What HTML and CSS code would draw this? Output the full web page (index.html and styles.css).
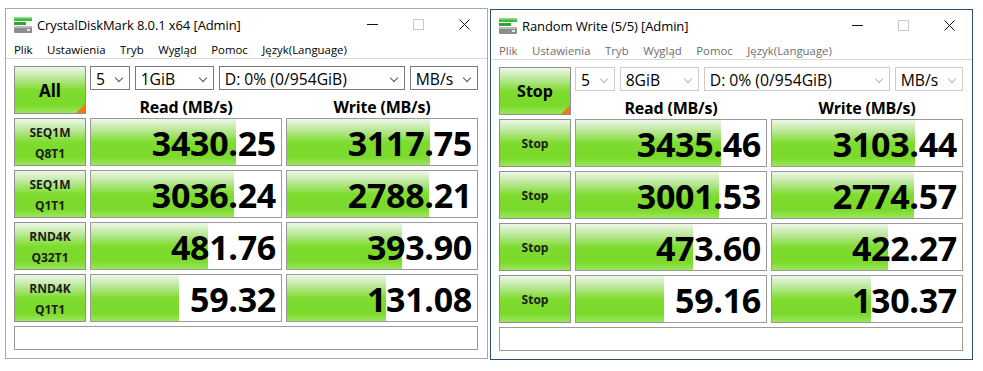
FILE: index.html
```html
<!DOCTYPE html>
<html>
<head>
    <title>CrystalDiskMark</title>
    <link rel="stylesheet" href="styles.css">
</head>
<body>
    <div class="desktop">
        <!-- finished run -->
        <div class="window">
            <div class="titlebar">
                <svg class="app-icon" width="18" height="16" viewBox="0 0 18 16">
                    <rect x="0" y="0" width="18" height="4" fill="#3dbb3d"/>
                    <rect x="0" y="0" width="18" height="1.5" fill="#8be38b"/>
                    <rect x="0" y="5" width="12" height="3" fill="#2fa52f"/>
                    <rect x="0" y="9" width="18" height="7" rx="1" fill="#8d8d8d"/>
                    <rect x="0" y="9" width="18" height="2" fill="#b9b9b9"/>
                    <rect x="13" y="12" width="3" height="2" fill="#e6e6e6"/>
                </svg>
                <span class="title">CrystalDiskMark 8.0.1 x64 [Admin]</span>
                <div class="caption-buttons">
                    <span class="cap cap-min"></span>
                    <span class="cap cap-max"></span>
                    <span class="cap cap-close">
                        <svg width="11" height="11" viewBox="0 0 11 11"><path d="M0.5 0.5 L10.5 10.5 M10.5 0.5 L0.5 10.5" stroke="#111" stroke-width="1"/></svg>
                    </span>
                </div>
            </div>
            <div class="menubar">
                <span>Plik</span><span>Ustawienia</span><span>Tryb</span><span>Wygląd</span><span>Pomoc</span><span>Język(Language)</span>
            </div>
            <div class="content">
                <div class="grid">
                    <div class="run-btn">All</div>
                    <div class="top-area">
                        <div class="selects">
                            <div class="select s-count">5<i class="arrow"></i></div>
                            <div class="select s-size">1GiB<i class="arrow"></i></div>
                            <div class="select s-drive">D: 0% (0/954GiB)<i class="arrow"></i></div>
                            <div class="select s-unit">MB/s<i class="arrow"></i></div>
                        </div>
                        <div class="headers">
                            <div>Read (MB/s)</div>
                            <div>Write (MB/s)</div>
                        </div>
                    </div>

                    <div class="label">SEQ1M<br>Q8T1</div>
                    <div class="meter"><div class="fill" style="width:145px"></div><span>3430.25</span></div>
                    <div class="meter"><div class="fill" style="width:143px"></div><span>3117.75</span></div>

                    <div class="label">SEQ1M<br>Q1T1</div>
                    <div class="meter"><div class="fill" style="width:143px"></div><span>3036.24</span></div>
                    <div class="meter"><div class="fill" style="width:142px"></div><span>2788.21</span></div>

                    <div class="label">RND4K<br>Q32T1</div>
                    <div class="meter"><div class="fill" style="width:117px"></div><span>481.76</span></div>
                    <div class="meter"><div class="fill" style="width:115px"></div><span>393.90</span></div>

                    <div class="label">RND4K<br>Q1T1</div>
                    <div class="meter"><div class="fill" style="width:88px"></div><span>59.32</span></div>
                    <div class="meter"><div class="fill" style="width:99px"></div><span>131.08</span></div>

                    <div class="status"></div>
                </div>
            </div>
        </div>

        <!-- running -->
        <div class="window window-active">
            <div class="titlebar">
                <svg class="app-icon" width="18" height="16" viewBox="0 0 18 16">
                    <rect x="0" y="0" width="18" height="4" fill="#3dbb3d"/>
                    <rect x="0" y="0" width="18" height="1.5" fill="#8be38b"/>
                    <rect x="0" y="5" width="12" height="3" fill="#2fa52f"/>
                    <rect x="0" y="9" width="18" height="7" rx="1" fill="#8d8d8d"/>
                    <rect x="0" y="9" width="18" height="2" fill="#b9b9b9"/>
                    <rect x="13" y="12" width="3" height="2" fill="#e6e6e6"/>
                </svg>
                <span class="title">Random Write (5/5) [Admin]</span>
                <div class="caption-buttons">
                    <span class="cap cap-min"></span>
                    <span class="cap cap-max"></span>
                    <span class="cap cap-close">
                        <svg width="11" height="11" viewBox="0 0 11 11"><path d="M0.5 0.5 L10.5 10.5 M10.5 0.5 L0.5 10.5" stroke="#111" stroke-width="1"/></svg>
                    </span>
                </div>
            </div>
            <div class="menubar disabled">
                <span>Plik</span><span>Ustawienia</span><span>Tryb</span><span>Wygląd</span><span>Pomoc</span><span>Język(Language)</span>
            </div>
            <div class="content">
                <div class="grid">
                    <div class="run-btn run-stop">Stop</div>
                    <div class="top-area">
                        <div class="selects disabled">
                            <div class="select s-count">5<i class="arrow"></i></div>
                            <div class="select s-size">8GiB<i class="arrow"></i></div>
                            <div class="select s-drive">D: 0% (0/954GiB)<i class="arrow"></i></div>
                            <div class="select s-unit">MB/s<i class="arrow"></i></div>
                        </div>
                        <div class="headers">
                            <div>Read (MB/s)</div>
                            <div>Write (MB/s)</div>
                        </div>
                    </div>

                    <div class="label label-stop">Stop</div>
                    <div class="meter"><div class="fill" style="width:145px"></div><span>3435.46</span></div>
                    <div class="meter"><div class="fill" style="width:143px"></div><span>3103.44</span></div>

                    <div class="label label-stop">Stop</div>
                    <div class="meter"><div class="fill" style="width:143px"></div><span>3001.53</span></div>
                    <div class="meter"><div class="fill" style="width:142px"></div><span>2774.57</span></div>

                    <div class="label label-stop">Stop</div>
                    <div class="meter"><div class="fill" style="width:117px"></div><span>473.60</span></div>
                    <div class="meter"><div class="fill" style="width:116px"></div><span>422.27</span></div>

                    <div class="label label-stop">Stop</div>
                    <div class="meter"><div class="fill" style="width:88px"></div><span>59.16</span></div>
                    <div class="meter"><div class="fill" style="width:99px"></div><span>130.37</span></div>

                    <div class="status"></div>
                </div>
            </div>
        </div>
    </div>
</body>
</html>
```

FILE: styles.css
```css
body {
    margin: 0;
    background: #fff;
    font-family: 'Open Sans', 'Noto Sans', Arial, sans-serif;
    color: #000;
}
.desktop {
    display: flex;
    align-items: flex-start;
    padding: 8px 0 0 5px;
    gap: 2px;
}
.window {
    width: 481px;
    border: 1px solid #a9a9a9;
    background: #fff;
}
.window-active {
    margin-top: 1px;
    border-color: #2f4d6c;
}
.titlebar {
    display: flex;
    align-items: center;
    height: 31px;
    padding-left: 8px;
}
.app-icon {
    margin-right: 5px;
}
.title {
    font-size: 13px;
    letter-spacing: -0.1px;
    flex-grow: 1;
}
.caption-buttons {
    display: flex;
    height: 100%;
}
.cap {
    width: 46px;
    display: flex;
    align-items: center;
    justify-content: center;
}
.cap-min:before {
    content: "";
    width: 11px;
    height: 1px;
    background: #111;
}
.cap-max:before {
    content: "";
    width: 9px;
    height: 9px;
    border: 1px solid #c8c8c8;
}
.menubar {
    display: flex;
    height: 18px;
    align-items: center;
    font-size: 11.4px;
    padding-left: 8px;
    border-bottom: 1px solid #dadada;
}
.menubar span {
    margin-right: 14.5px;
}
.menubar.disabled {
    color: #6e6e6e;
}
.content {
    padding: 7px 8px 8px 8px;
}
.grid {
    display: grid;
    grid-template-columns: 72px 192px 192px;
    grid-template-rows: 48px 48px 48px 48px 48px 24px;
    gap: 4px;
}
.run-btn {
    position: relative;
    border: 1px solid #8f8f8f;
    background: linear-gradient(to bottom, #eef7e8 0%, #bfe9a0 22%, #7fdc30 50%, #7ad92a 82%, #9be65c 100%);
    font-weight: bold;
    font-size: 17px;
    display: flex;
    align-items: center;
    justify-content: center;
}
.run-btn.run-stop {
    font-size: 16px;
}
.run-btn:after {
    content: "";
    position: absolute;
    right: 0;
    bottom: 0;
    border-style: solid;
    border-width: 0 0 9px 9px;
    border-color: transparent transparent #f07a1a transparent;
}
.top-area {
    grid-column: span 2;
    display: flex;
    flex-direction: column;
}
.selects {
    display: flex;
    gap: 5px;
    height: 24px;
}
.select {
    border: 1px solid #7a7a7a;
    box-sizing: border-box;
    height: 24px;
    font-size: 15.7px;
    line-height: 24px;
    padding-left: 5px;
    position: relative;
}
.selects.disabled .select {
    border-color: #cccccc;
}
.s-count { width: 40px; }
.s-size { width: 80px; }
.s-drive { width: 188px; }
.s-unit { width: 69px; }
.arrow {
    position: absolute;
    right: 7px;
    top: 8px;
    width: 5px;
    height: 5px;
    border-right: 1px solid #555;
    border-bottom: 1px solid #555;
    transform: rotate(45deg);
}
.selects.disabled .arrow {
    border-color: #b5b5b5;
}
.headers {
    display: flex;
    gap: 4px;
    flex-grow: 1;
    align-items: center;
    padding-top: 6px;
}
.headers div {
    width: 192px;
    text-align: center;
    font-weight: bold;
    font-size: 16px;
    letter-spacing: -0.2px;
}
.label {
    border: 1px solid #8f8f8f;
    background: linear-gradient(to bottom, #eef7e8 0%, #bfe9a0 22%, #7fdc30 50%, #7ad92a 82%, #9be65c 100%);
    font-weight: bold;
    font-size: 12px;
    line-height: 21px;
    padding-top: 1px;
    color: #1c1c1c;
    display: flex;
    align-items: center;
    justify-content: center;
    text-align: center;
}
.meter {
    border: 1px solid #9a9a9a;
    background: #fff;
    position: relative;
    display: flex;
    align-items: center;
    justify-content: flex-end;
    overflow: hidden;
}
.meter .fill {
    position: absolute;
    left: 0;
    top: 0;
    bottom: 0;
    background: linear-gradient(to bottom, #eef7e8 0%, #bfe9a0 22%, #7fdc30 50%, #7ad92a 82%, #9be65c 100%);
}
.meter span {
    position: relative;
    font-weight: bold;
    font-size: 34px;
    padding-right: 5px;
    padding-top: 2px;
    letter-spacing: -0.3px;
}
.status {
    grid-column: span 3;
    border: 1px solid #9a9a9a;
}
```
